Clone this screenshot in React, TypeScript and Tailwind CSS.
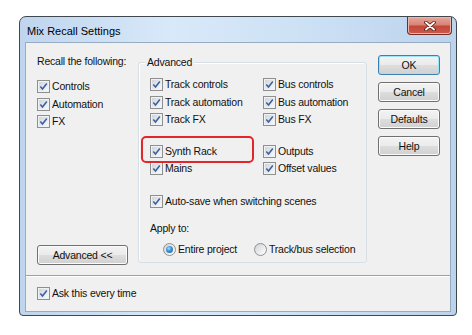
import React from "react";

const FONT = "font-['Liberation_Sans',Arial,sans-serif]";
const TEXT = "text-[10.5px] tracking-[-0.2px] leading-[13px] text-[#111]";

function CheckBox({ checked = true }: { checked?: boolean }) {
  return (
    <span className="flex h-[13px] w-[13px] shrink-0 items-center justify-center border border-[#8e8f8f] bg-[linear-gradient(135deg,#cdd1d6,#e6e9ec_55%,#fbfbfc)] shadow-[inset_0_0_0_1px_#f0f1f2]">
      {checked && (
        <svg width="11" height="11" viewBox="0 0 11 11">
          <path d="M2.3 5.5 L4.5 8 L8.8 2.5" fill="none" stroke="#3a5ea3" strokeWidth="1.5" />
        </svg>
      )}
    </span>
  );
}

function CheckRow({ label, className = "" }: { label: string; className?: string }) {
  return (
    <div className={`flex h-[17.5px] items-center gap-[2px] ${className}`}>
      <CheckBox />
      <span className={TEXT}>{label}</span>
    </div>
  );
}

function Radio({ selected }: { selected?: boolean }) {
  return (
    <span className="flex h-[13px] w-[13px] shrink-0 items-center justify-center rounded-full border border-[#8e8f8f] bg-[linear-gradient(135deg,#d0d3d6,#eceef0_60%,#ffffff)]">
      {selected && (
        <span className="h-[7px] w-[7px] rounded-full bg-[radial-gradient(circle_at_40%_35%,#a6dcfa_0%,#3a8fd2_45%,#165b9a_100%)]" />
      )}
    </span>
  );
}

function WinButton({ label, primary, className = "" }: { label: string; primary?: boolean; className?: string }) {
  return (
    <div
      className={`flex h-[20px] items-center justify-center rounded-[3px] border ${
        primary
          ? "border-[#3c7fb1] shadow-[inset_0_0_0_1px_#9fe3fb]"
          : "border-[#707070] shadow-[inset_0_0_0_1px_#fbfbfb]"
      } bg-[linear-gradient(180deg,#f3f3f3_0%,#ebebeb_48%,#dddddd_52%,#d0d0d0_100%)] ${TEXT} ${className}`}
    >
      {label}
    </div>
  );
}

export default function App() {
  return (
    <div className={`h-[335px] w-[472px] bg-white pl-[19px] pt-[16px] ${FONT}`}>
      <div className="flex h-[300px] w-[438px] flex-col rounded-t-[7px] rounded-b-[4px] border border-[#40474f] bg-[linear-gradient(90deg,#bfd5ee,#d8e9f9_35%,#cde1f5_65%,#bcd3ec)]">
        {/* title bar */}
        <div className="flex h-[25px] items-start justify-between">
          <span className="pl-[7px] pt-[8px] text-[11px] leading-[13px] text-black">Mix Recall Settings</span>
          <div className="mr-[4px] flex h-[18px] w-[45px] items-center justify-center rounded-b-[4px] border border-t-0 border-[#7a2a22] bg-[linear-gradient(180deg,#e6a89c_0%,#d88476_45%,#c5473a_55%,#c85a4c_100%)] shadow-[inset_0_0_0_1px_#eab8ae]">
            <svg width="12" height="10" viewBox="0 0 12 10">
              <path d="M2 1.5 L10 8.5 M10 1.5 L2 8.5" stroke="#4a1a14" strokeWidth="3.6" strokeLinecap="round" />
              <path d="M2 1.5 L10 8.5 M10 1.5 L2 8.5" stroke="#ffffff" strokeWidth="1.9" strokeLinecap="round" />
            </svg>
          </div>
        </div>

        {/* client area */}
        <div className="px-[5px]">
          <div className="flex h-[270px] w-[426px] flex-col border border-[#97abc3] bg-[#f0f0f0]">
            <div className="flex h-[232px]">
              {/* left column */}
              <div className="flex w-[112px] flex-col pl-[11px]">
                <span className={`mt-[12px] ${TEXT}`}>Recall the following:</span>
                <div className="mt-[10px] flex flex-col">
                  <CheckRow label="Controls" />
                  <CheckRow label="Automation" />
                  <CheckRow label="FX" />
                </div>
                <WinButton label="Advanced <<" className="mb-[10px] mt-auto w-[91px]" />
              </div>

              {/* advanced group */}
              <div className="relative mt-[19px] h-[201px] w-[229px] rounded-[3px] border border-[#d5dfe5] pl-[11px] pt-[13px] shadow-[inset_1px_1px_0_#ffffff]">
                <span className={`absolute -top-[7px] left-[6px] bg-[#f0f0f0] px-[2px] ${TEXT}`}>Advanced</span>
                <div className="flex">
                  <div className="flex w-[113px] flex-col">
                    <CheckRow label="Track controls" />
                    <CheckRow label="Track automation" />
                    <CheckRow label="Track FX" />
                  </div>
                  <div className="flex flex-col">
                    <CheckRow label="Bus controls" />
                    <CheckRow label="Bus automation" />
                    <CheckRow label="Bus FX" />
                  </div>
                </div>
                <div className="mt-[14px] flex">
                  <div className="flex w-[113px] flex-col">
                    <CheckRow label="Synth Rack" />
                    <CheckRow label="Mains" />
                  </div>
                  <div className="flex flex-col">
                    <CheckRow label="Outputs" />
                    <CheckRow label="Offset values" />
                  </div>
                </div>
                <CheckRow label="Auto-save when switching scenes" className="mt-[15px]" />
                <div className={`mt-[12px] ${TEXT}`}>Apply to:</div>
                <div className="mt-[5px] flex h-[18px] items-center pl-[13px]">
                  <div className="flex w-[91px] items-center gap-[2px]">
                    <Radio selected />
                    <span className={TEXT}>Entire project</span>
                  </div>
                  <div className="flex items-center gap-[2px]">
                    <Radio />
                    <span className={TEXT}>Track/bus selection</span>
                  </div>
                </div>
                <div className="absolute left-[2px] top-[73px] h-[27px] w-[113px] rounded-[5px] border-2 border-[#e3262b]" />
              </div>

              {/* buttons */}
              <div className="ml-[11px] flex flex-col gap-[7px] pt-[12px]">
                <WinButton label="OK" primary className="w-[62px]" />
                <WinButton label="Cancel" className="w-[62px]" />
                <WinButton label="Defaults" className="w-[62px]" />
                <WinButton label="Help" className="w-[62px]" />
              </div>
            </div>

            <div className="h-px bg-[#a0a0a0]" />
            <div className="h-px bg-white" />
            <div className="flex flex-1 items-center pb-[1px] pl-[11px]">
              <CheckRow label="Ask this every time" />
            </div>
          </div>
        </div>
      </div>
    </div>
  );
}
